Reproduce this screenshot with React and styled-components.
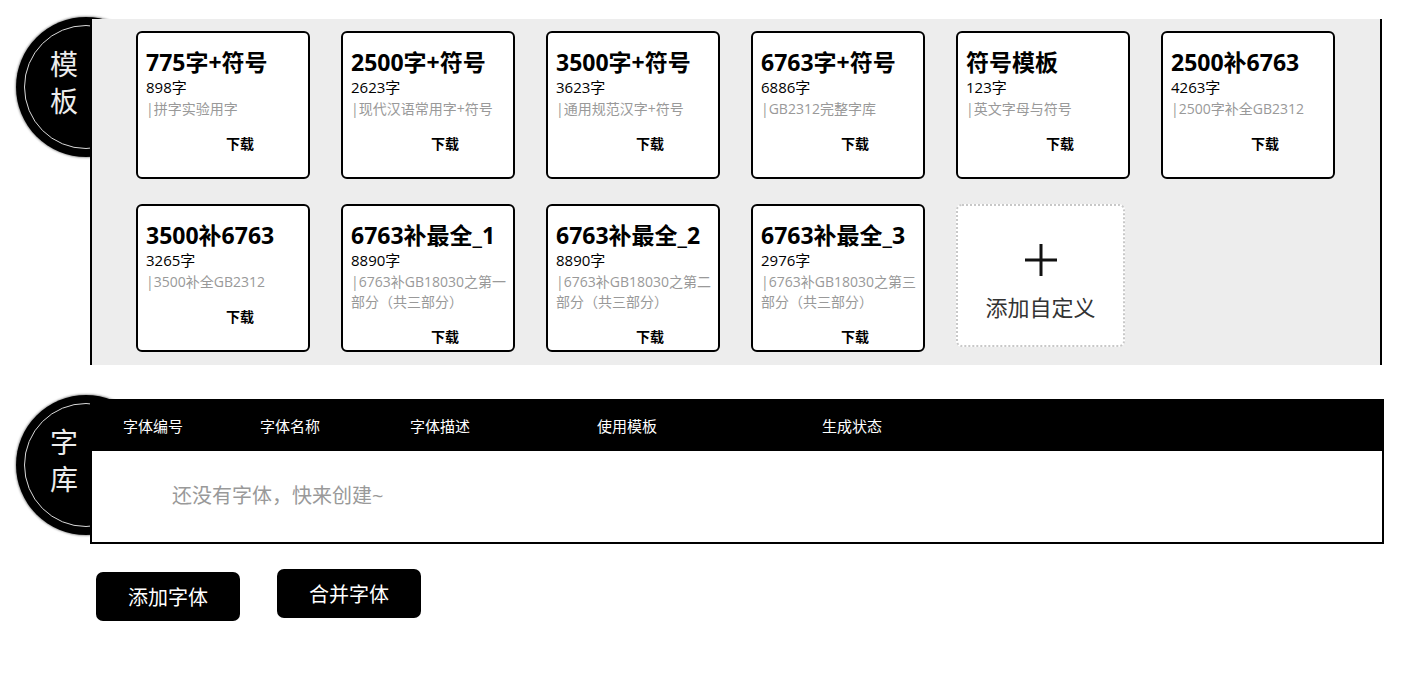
import React from "react";
import styled, { createGlobalStyle } from "styled-components";

const GlobalStyle = createGlobalStyle`
  * { box-sizing: border-box; }
  body {
    margin: 0;
    background: #fff;
    font-family: "Open Sans", "Noto Sans CJK SC", sans-serif;
    color: #000;
  }
`;

const Page = styled.div`
  padding-top: 19px;
  width: 1414px;
`;

const Row = styled.div`
  display: flex;
  align-items: flex-start;
  padding-left: 16px;
  margin-bottom: ${(p) => p.$gap || 0}px;
`;

const Badge = styled.div`
  flex: none;
  width: 140px;
  height: 140px;
  margin-top: ${(p) => p.$lift}px;
  margin-right: -66px;
  border-radius: 50%;
  background: #000;
  position: relative;
  display: flex;
  flex-direction: column;
  justify-content: center;
  padding: 0 0 10px 34px;
  box-shadow: 0 0 2px 1px rgba(0, 0, 0, 0.35);

  &::after {
    content: "";
    position: absolute;
    inset: 8px;
    border-radius: 50%;
    border: 1.5px solid #d8d8d8;
  }
`;

const BadgeChar = styled.span`
  color: #ececec;
  font-size: 28px;
  line-height: 37px;
  font-weight: 400;
  font-family: "Noto Sans CJK SC", sans-serif;
`;

const Panel = styled.div`
  position: relative;
  z-index: 1;
  width: 1292px;
  background: #ededed;
  border-left: 2px solid #000;
  border-right: 2px solid #000;
  padding: 12px 0 13px 44px;
  display: flex;
  flex-wrap: wrap;
  column-gap: 31px;
  row-gap: 25px;
`;

const Card = styled.div`
  width: 174px;
  height: 148px;
  background: #fff;
  border: 2px solid #000;
  border-radius: 6px;
  padding: 14px 0 0 8px;
`;

const Title = styled.div`
  font-size: 23px;
  line-height: 30px;
  font-weight: 700;
  white-space: nowrap;
`;

const Count = styled.div`
  font-size: 15px;
  line-height: 20px;
`;

const Desc = styled.div`
  width: 163px;
  margin-top: 2px;
  font-size: 14px;
  line-height: 20px;
  color: #999;
`;

const Download = styled.div`
  margin: 15px 0 0 80px;
  font-size: 14px;
  line-height: 20px;
  font-weight: 700;
`;

const AddCard = styled.div`
  width: 169px;
  height: 143px;
  background: #fff;
  border: 2px dotted #c8c8c8;
  border-radius: 6px;
  display: flex;
  flex-direction: column;
  align-items: center;
  padding-top: 36px;
  color: #333;
`;

const AddLabel = styled.div`
  margin-top: 14px;
  font-size: 22px;
  line-height: 30px;
`;

const Library = styled.div`
  position: relative;
  z-index: 1;
  width: 1294px;
`;

const HeadBar = styled.div`
  height: 52px;
  background: #000;
  color: #fff;
  display: grid;
  grid-template-columns: 137px 150px 187px 225px auto;
  align-items: center;
  padding-left: 33px;
  font-size: 15px;
`;

const Body = styled.div`
  width: 1294px;
  height: 93px;
  background: #fff;
  border: 2px solid #000;
  border-top: none;
  display: flex;
  align-items: center;
  padding: 0 0 4px 80px;
  font-size: 20px;
  color: #999;
`;

const Actions = styled.div`
  display: flex;
  align-items: flex-start;
  gap: 37px;
  padding-left: 96px;
  margin-top: 25px;
`;

const Button = styled.button`
  width: 144px;
  height: 49px;
  margin-top: ${(p) => p.$offset}px;
  background: #000;
  color: #fff;
  border: none;
  border-radius: 7px;
  font-family: inherit;
  font-size: 20px;
  cursor: pointer;
`;

const templates = [
  { title: "775字+符号", count: "898字", desc: "|拼字实验用字" },
  { title: "2500字+符号", count: "2623字", desc: "|现代汉语常用字+符号" },
  { title: "3500字+符号", count: "3623字", desc: "|通用规范汉字+符号" },
  { title: "6763字+符号", count: "6886字", desc: "|GB2312完整字库" },
  { title: "符号模板", count: "123字", desc: "|英文字母与符号" },
  { title: "2500补6763", count: "4263字", desc: "|2500字补全GB2312" },
  { title: "3500补6763", count: "3265字", desc: "|3500补全GB2312" },
  { title: "6763补最全_1", count: "8890字", desc: "|6763补GB18030之第一部分（共三部分）" },
  { title: "6763补最全_2", count: "8890字", desc: "|6763补GB18030之第二部分（共三部分）" },
  { title: "6763补最全_3", count: "2976字", desc: "|6763补GB18030之第三部分（共三部分）" },
];

const columns = ["字体编号", "字体名称", "字体描述", "使用模板", "生成状态"];

const Plus = () => (
  <svg width="36" height="36" viewBox="0 0 36 36">
    <path d="M18 2v32M2 18h32" stroke="#111" strokeWidth="3" fill="none" />
  </svg>
);

export default function App() {
  return (
    <Page>
      <GlobalStyle />
      <Row $gap={34}>
        <Badge $lift={-2}>
          <BadgeChar>模</BadgeChar>
          <BadgeChar>板</BadgeChar>
        </Badge>
        <Panel>
          {templates.map((t) => (
            <Card key={t.title}>
              <Title>{t.title}</Title>
              <Count>{t.count}</Count>
              <Desc>{t.desc}</Desc>
              <Download>下载</Download>
            </Card>
          ))}
          <AddCard>
            <Plus />
            <AddLabel>添加自定义</AddLabel>
          </AddCard>
        </Panel>
      </Row>
      <Row>
        <Badge $lift={-4}>
          <BadgeChar>字</BadgeChar>
          <BadgeChar>库</BadgeChar>
        </Badge>
        <Library>
          <HeadBar>
            {columns.map((c) => (
              <span key={c}>{c}</span>
            ))}
          </HeadBar>
          <Body>还没有字体，快来创建~</Body>
        </Library>
      </Row>
      <Actions>
        <Button $offset={3}>添加字体</Button>
        <Button $offset={0}>合并字体</Button>
      </Actions>
    </Page>
  );
}
